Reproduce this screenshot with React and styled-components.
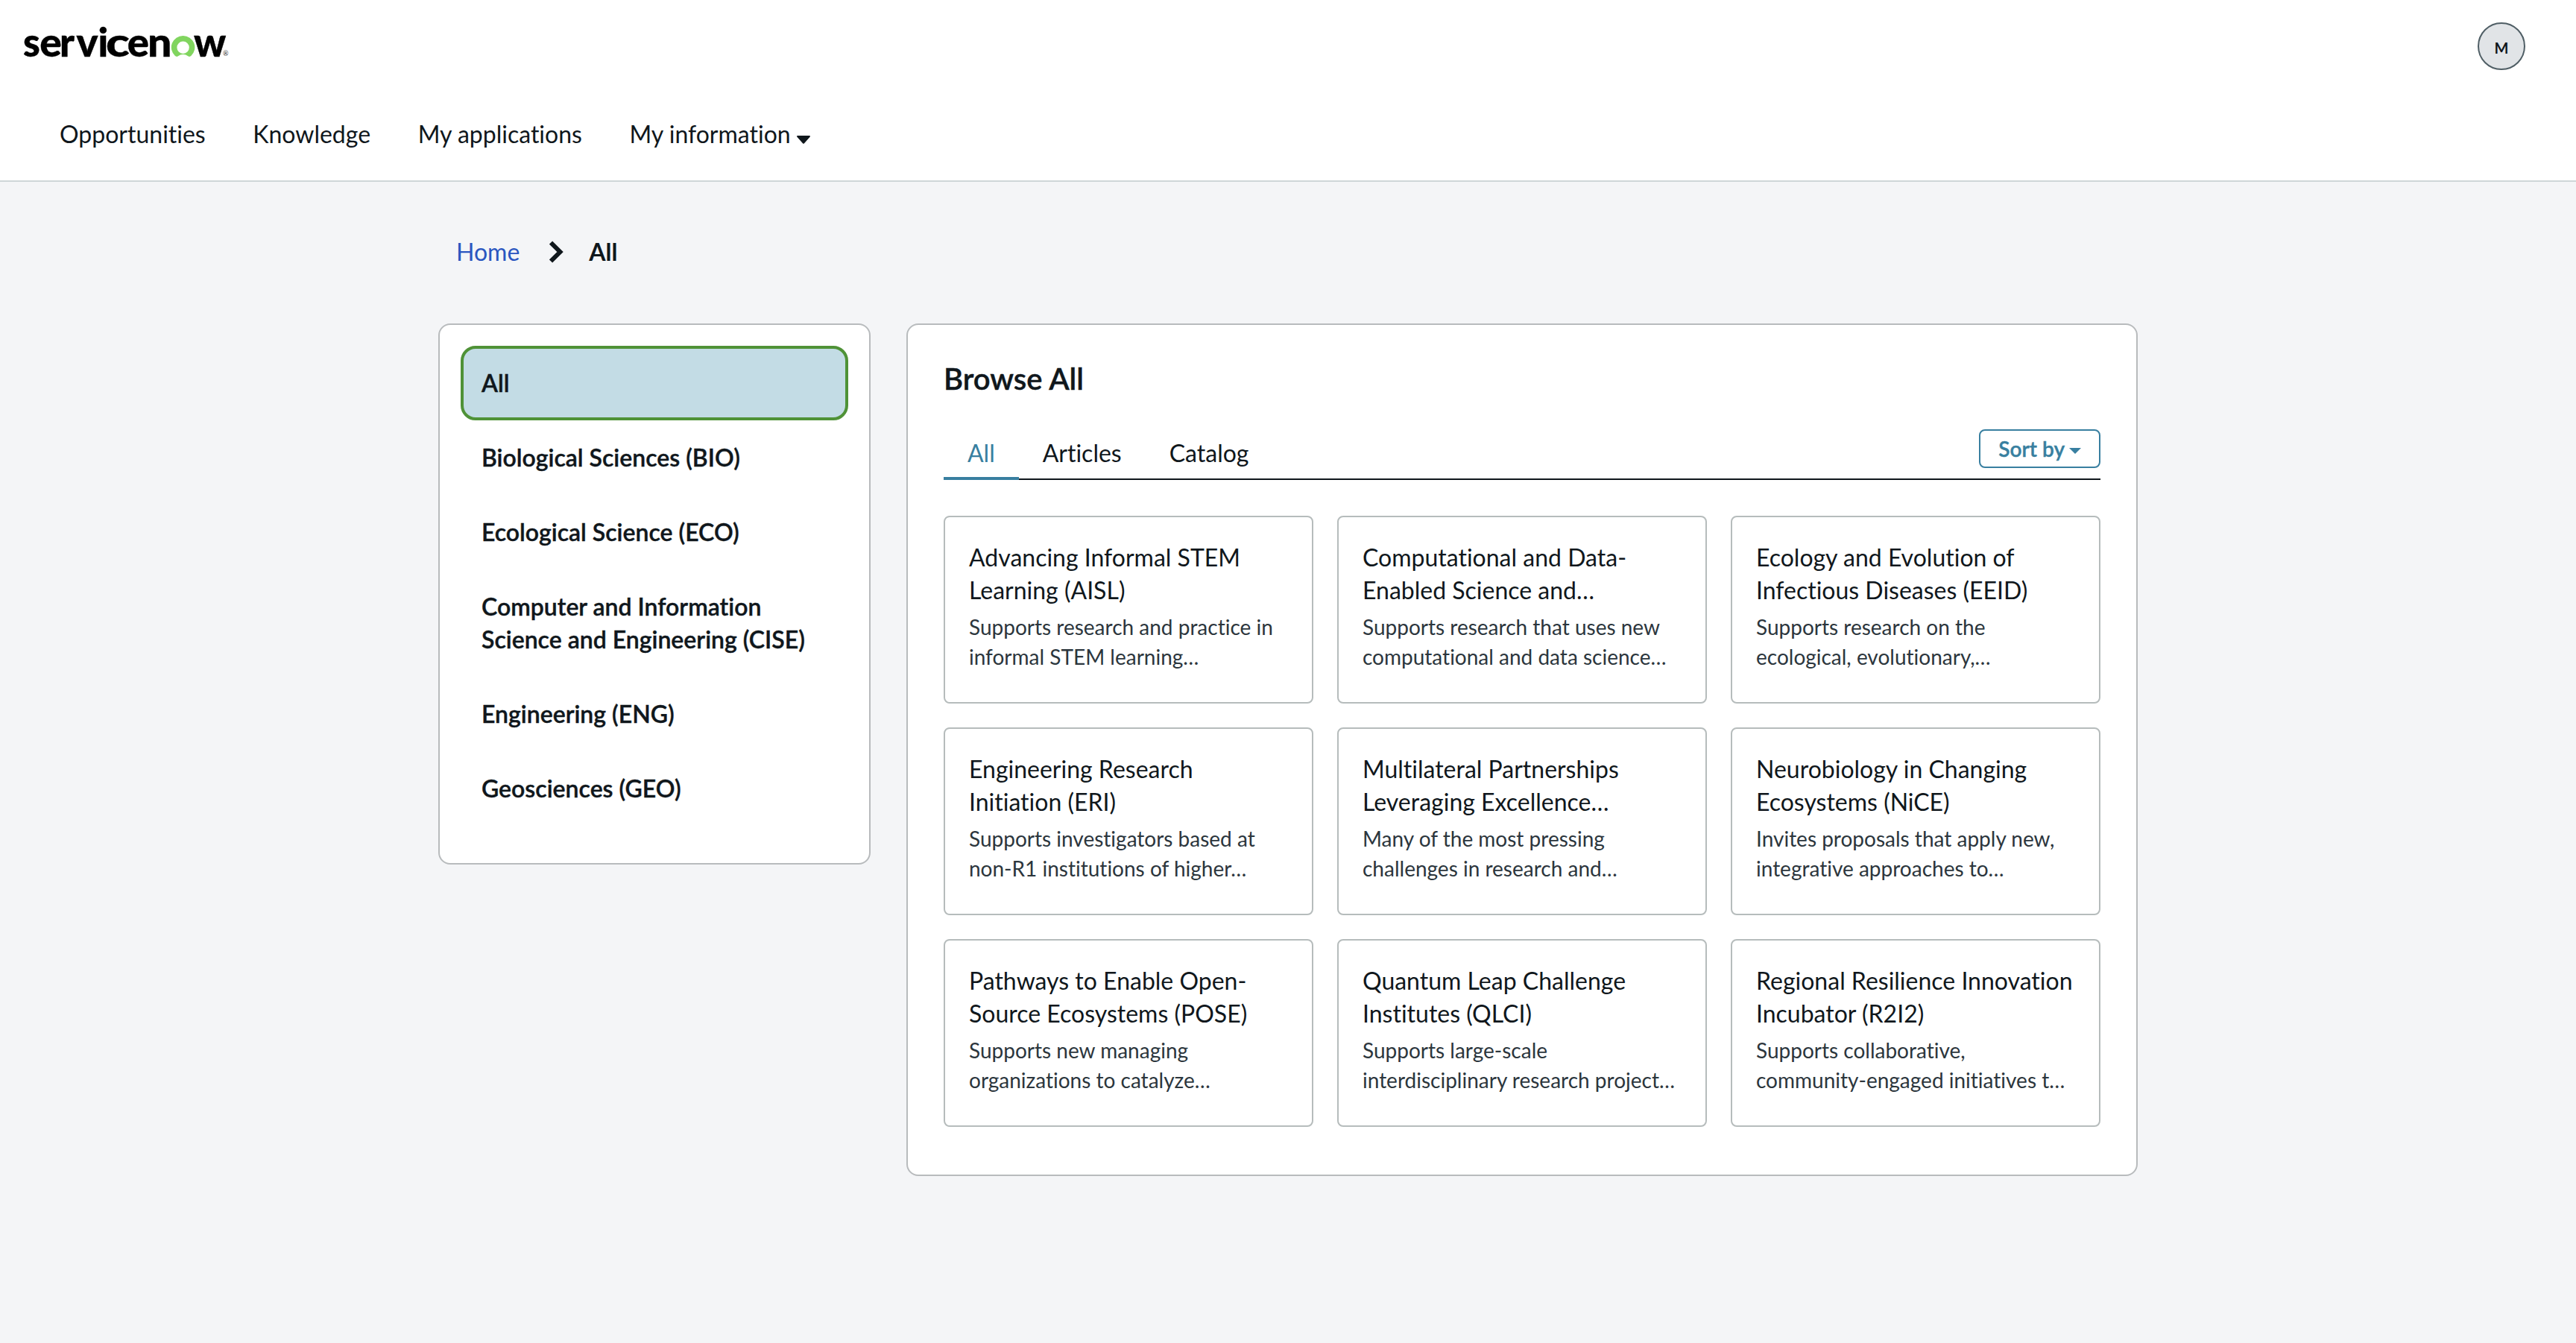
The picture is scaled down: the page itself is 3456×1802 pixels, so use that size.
import React, { useState } from 'react';
import styled, { createGlobalStyle } from 'styled-components';

const navLinks = ['Opportunities', 'Knowledge', 'My applications'];

const categories = [
  'All',
  'Biological Sciences (BIO)',
  'Ecological Science (ECO)',
  'Computer and Information Science and Engineering (CISE)',
  'Engineering (ENG)',
  'Geosciences (GEO)',
];

const tabs = ['All', 'Articles', 'Catalog'];

const items = [
  {
    title: 'Advancing Informal STEM Learning (AISL)',
    text: 'Supports research and practice in informal STEM learning…',
  },
  {
    title: 'Computational and Data-Enabled Science and…',
    text: 'Supports research that uses new computational and data science…',
  },
  {
    title: 'Ecology and Evolution of Infectious Diseases (EEID)',
    text: 'Supports research on the ecological, evolutionary,…',
  },
  {
    title: 'Engineering Research Initiation (ERI)',
    text: 'Supports investigators based at non-R1 institutions of higher…',
  },
  {
    title: 'Multilateral Partnerships Leveraging Excellence…',
    text: 'Many of the most pressing challenges in research and…',
  },
  {
    title: 'Neurobiology in Changing Ecosystems (NiCE)',
    text: 'Invites proposals that apply new, integrative approaches to…',
  },
  {
    title: 'Pathways to Enable Open-Source Ecosystems (POSE)',
    text: 'Supports new managing organizations to catalyze…',
  },
  {
    title: 'Quantum Leap Challenge Institutes (QLCI)',
    text: 'Supports large-scale interdisciplinary research project…',
  },
  {
    title: 'Regional Resilience Innovation Incubator (R2I2)',
    text: 'Supports collaborative, community-engaged initiatives t…',
  },
];

// letter, x offset and horizontal stretch of the wordmark
const logoLetters = [
  ['s', -1, 0.97],
  ['e', 21.3, 1.04],
  ['r', 48.1, 1],
  ['v', 70.5, 1.03],
  ['i', 99.4, 1],
  ['c', 110.1, 1.24],
  ['e', 138.7, 1.03],
  ['n', 166, 1.08],
  ['w', 228, 1.01],
];

const Logo = () => (
  <LogoSvg viewBox='-4 -12 290 72' role='img' aria-label='servicenow'>
    {logoLetters.map(([letter, x, stretch]) => (
      <LogoText key={x} transform={`translate(${x} 43.5) scale(${stretch} 1)`}>
        {letter}
      </LogoText>
    ))}
    <path
      fill='#81d55f'
      d='M213.6 16a15.6 15.6 0 0 0-10.7 27.1c1.2 1 2.9 1.1 4.1.2a10.8 10.8 0 0 1 13.2 0c1.3.9 3 .8 4.1-.2A15.6 15.6 0 0 0 213.6 16Zm0 24a8.2 8.2 0 1 1 0-16.4 8.2 8.2 0 0 1 0 16.4Z'
    />
    <LogoMark x='267' y='43'>®</LogoMark>
  </LogoSvg>
);

const Header = () => (
  <HeaderBar>
    <TopRow>
      <Logo />
      <Avatar>M</Avatar>
    </TopRow>
    <Nav>
      {navLinks.map(link => (
        <NavLink key={link}>{link}</NavLink>
      ))}
      <NavLink>
        My information
        <NavCaret viewBox='0 0 18 11'>
          <path d='M1.2 0h15.6c1 0 1.5 1 .8 1.7L9.8 10.4c-.5.5-1.1.5-1.6 0L.4 1.7C-.3 1 .2 0 1.2 0Z' />
        </NavCaret>
      </NavLink>
    </Nav>
  </HeaderBar>
);

const Browse = () => {
  const [active, setActive] = useState('All');

  return (
    <BrowsePanel>
      <Title>Browse All</Title>
      <TabBar>
        <TabList>
          {tabs.map(tab => (
            <Tab key={tab} $active={tab === active} onClick={() => setActive(tab)}>
              {tab}
            </Tab>
          ))}
        </TabList>
        <SortButton>
          Sort by
          <SortCaret viewBox='0 0 16 8'>
            <path d='M0 0h16L8 8Z' />
          </SortCaret>
        </SortButton>
      </TabBar>
      <CardGrid>
        {items.map(item => (
          <Card key={item.title}>
            <CardTitle>{item.title}</CardTitle>
            <CardText>{item.text}</CardText>
          </Card>
        ))}
      </CardGrid>
    </BrowsePanel>
  );
};

const App = () => {
  const [category, setCategory] = useState('All');

  return (
    <>
      <GlobalStyle />
      <Header />
      <Page>
        <Breadcrumb>
          <HomeLink>Home</HomeLink>
          <Chevron viewBox='0 0 19 30'>
            <path d='M2 2.5 14.5 15 2 27.5' />
          </Chevron>
          <Current>All</Current>
        </Breadcrumb>
        <Columns>
          <Sidebar>
            {categories.map(name => (
              <Category
                key={name}
                $active={name === category}
                onClick={() => setCategory(name)}
              >
                {name}
              </Category>
            ))}
          </Sidebar>
          <Browse />
        </Columns>
      </Page>
    </>
  );
};

const GlobalStyle = createGlobalStyle`
  * {
    box-sizing: border-box;
  }
  body {
    margin: 0;
    min-height: 1802px;
    background: #f4f5f7;
    color: #10171c;
    font-family: Lato, sans-serif;
    font-size: 32px;
    font-variant-ligatures: none;
    line-height: 44px;
  }
`;

const HeaderBar = styled.header`
  height: 244px;
  background: #fff;
  border-bottom: 2px solid #cfd6d8;
`;

const TopRow = styled.div`
  display: flex;
  justify-content: space-between;
  align-items: flex-start;
  height: 120px;
  padding: 20px 68px 0 28px;
`;

const LogoSvg = styled.svg`
  width: 290px;
  height: 72px;
`;

const LogoText = styled.text`
  font-family: Lato, sans-serif;
  font-size: 53px;
  font-weight: 900;
  fill: #000;
  stroke: #000;
  stroke-width: 0.4px;
`;

const LogoMark = styled.text`
  font-family: Lato, sans-serif;
  font-size: 9px;
  fill: #333;
`;

const Avatar = styled.div`
  display: flex;
  align-items: center;
  justify-content: center;
  width: 64px;
  height: 64px;
  margin-top: 10px;
  padding-top: 4px;
  border: 2px solid #4f5e65;
  border-radius: 50%;
  background: #e1e4e7;
  font-size: 20px;
  font-weight: 700;
`;

const Nav = styled.nav`
  display: flex;
  gap: 63.6px;
  padding: 38px 80px 0;
`;

const NavLink = styled.a`
  display: flex;
  align-items: flex-start;
  cursor: pointer;
`;

const NavCaret = styled.svg`
  width: 18px;
  height: 11px;
  margin: 24px 0 0 8px;
  fill: #10171c;
`;

const Page = styled.main`
  width: 2280px;
  margin: 0 auto;
`;

const Breadcrumb = styled.div`
  display: flex;
  align-items: flex-start;
  height: 190px;
  padding: 72px 24px 0;
`;

const HomeLink = styled.a`
  color: #2b56c0;
  cursor: pointer;
`;

const Chevron = styled.svg`
  width: 19px;
  height: 30px;
  margin: 7px 34px 0 40px;
  fill: none;
  stroke: #10171c;
  stroke-width: 6;
`;

const Current = styled.span`
  font-weight: 700;
`;

const Columns = styled.div`
  display: flex;
  align-items: flex-start;
  gap: 48px;
`;

const Panel = styled.section`
  background: #fff;
  border: 2px solid #b8bbbd;
  border-radius: 16px;
`;

const Sidebar = styled(Panel)`
  width: 580px;
  padding: 28px 28px 50px;
`;

const Category = styled.div`
  padding: 24px;
  border: 4px solid ${props => (props.$active ? '#4f9237' : 'transparent')};
  border-radius: 20px;
  background: ${props => (props.$active ? '#c3dce5' : 'transparent')};
  font-weight: 600;
  -webkit-text-stroke: 0.4px;
  cursor: pointer;
`;

const BrowsePanel = styled(Panel)`
  width: 1652px;
  padding: 46px 48px 64px;
`;

const Title = styled.h1`
  margin: 0;
  font-size: 40px;
  font-weight: 600;
  line-height: 52px;
  -webkit-text-stroke: 0.4px;
`;

const TabBar = styled.div`
  display: flex;
  justify-content: space-between;
  align-items: flex-start;
  height: 110px;
  padding-top: 42px;
  border-bottom: 2px solid #10171c;
`;

const TabList = styled.div`
  display: flex;
`;

const Tab = styled.div`
  height: 68px;
  padding: 10px 32px 0;
  border-bottom: 4px solid ${props => (props.$active ? '#387fa0' : 'transparent')};
  color: ${props => (props.$active ? '#387fa0' : 'inherit')};
  cursor: pointer;
`;

const SortButton = styled.button`
  display: flex;
  align-items: center;
  gap: 6px;
  height: 52px;
  padding: 0 24px;
  border: 2px solid #387fa0;
  border-radius: 8px;
  background: #fff;
  color: #387fa0;
  font: 600 28px/40px Lato, sans-serif;
  -webkit-text-stroke: 0.4px;
`;

const SortCaret = styled.svg`
  width: 16px;
  height: 8px;
  margin-top: 5px;
  fill: currentColor;
`;

const CardGrid = styled.div`
  display: grid;
  grid-template-columns: repeat(3, 496px);
  grid-auto-rows: 252px;
  gap: 32px;
  margin-top: 48px;
`;

const Card = styled.article`
  padding: 32px;
  border: 2px solid #b6bcbc;
  border-radius: 8px;
`;

const CardTitle = styled.h2`
  margin: 0 0 7px;
  font-size: 32px;
  font-weight: 400;
  line-height: 44px;
`;

const CardText = styled.p`
  margin: 0;
  color: #2c363d;
  font-size: 28px;
  line-height: 40px;
`;

export default App;
